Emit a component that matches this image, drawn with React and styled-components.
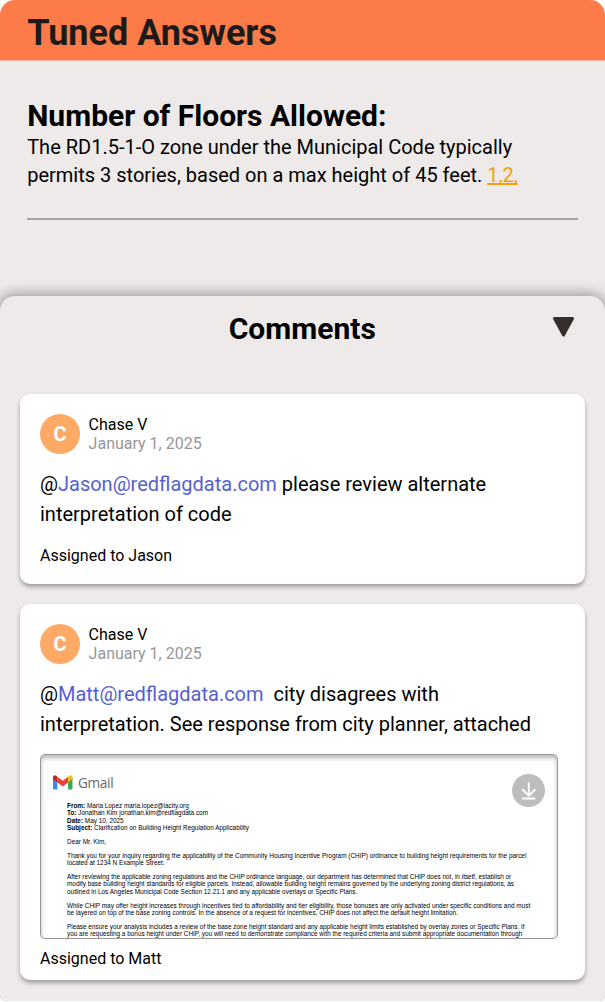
import React from "react";
import styled, { createGlobalStyle } from "styled-components";

const GlobalStyle = createGlobalStyle`
  * { box-sizing: border-box; }
  body {
    margin: 0;
    background: #fff;
    font-family: Roboto, "Liberation Sans", sans-serif;
    color: #000;
  }
  h1, h2, p { margin: 0; }
`;

const Page = styled.main`
  width: 605px;
  height: 1001px;
  overflow: hidden;
  display: flex;
  flex-direction: column;
  background: #eeeae9;
  border-radius: 15px 15px 5px 5px;
`;

const TitleBar = styled.header`
  flex: none;
  height: 61px;
  padding: 12px 27.2px 0;
  background: #fd7b48;
  border-bottom: 1px solid #f6b299;
`;

const Title = styled.h1`
  font-size: 36px;
  line-height: 42px;
  font-weight: 700;
  color: #1c1b1a;
`;

const Answer = styled.section`
  flex: none;
  height: 235px;
  padding: 37px 27.2px 0;
`;

const Heading = styled.h2`
  font-size: 30px;
  line-height: 35px;
  font-weight: 700;
`;

const AnswerText = styled.p`
  font-size: 20px;
  line-height: 28px;
  white-space: nowrap;
`;

const Source = styled.a`
  color: #f59e0b;
  text-decoration: underline;
  text-decoration-skip-ink: none;
`;

const Divider = styled.hr`
  margin: 29px 0 0;
  height: 1.5px;
  border: 0;
  background: #a5a2a2;
`;

const CommentsPanel = styled.section`
  flex: 1;
  padding: 0 20px;
  background: #eeeae9;
  border-radius: 15px 15px 5px 5px;
  box-shadow: 0 0 14px 2px rgba(0, 0, 0, 0.37);
`;

const PanelHeader = styled.div`
  height: 98px;
  padding: 15px 10px 0 9.6px;
  display: grid;
  grid-template-columns: 22px 1fr 22px;
  align-items: start;
  text-align: center;
`;

const Toggle = styled.svg`
  grid-column: 3;
  margin-top: 6px;
  width: 22px;
  height: 20px;
  display: block;
  overflow: visible;
`;

const PanelTitle = styled(Heading)`
  grid-column: 2;
`;

const CommentList = styled.div`
  display: flex;
  flex-direction: column;
  gap: 20px;
`;

const Card = styled.article`
  height: ${(p) => p.$height}px;
  padding: 20px 20px 0;
  background: #fff;
  border-radius: 10px;
  box-shadow: 0 3px 4px rgba(0, 0, 0, 0.32);
`;

const Author = styled.div`
  display: flex;
  gap: 8.6px;
  height: 40px;
`;

const Avatar = styled.div`
  width: 40px;
  height: 40px;
  border-radius: 50%;
  display: flex;
  align-items: center;
  justify-content: center;
  background: #fea964;
  color: #fff;
  font-size: 20px;
  font-weight: 700;
`;

const AuthorInfo = styled.div`
  padding-top: 1px;
  font-size: 16px;
  line-height: 19px;
`;

const PostedOn = styled.div`
  color: #979797;
`;

const Message = styled.p`
  margin-top: 15px;
  font-size: 20px;
  line-height: 30px;
  white-space: pre;
`;

const Mention = styled.span`
  color: #5661d0;
`;

const Assignee = styled.p`
  margin-top: ${(p) => p.$gap}px;
  font-size: 16px;
  line-height: 19px;
`;

const Attachment = styled.div`
  position: relative;
  width: 518px;
  height: 185px;
  margin-top: 15px;
  padding: 20px 0 0 12px;
  overflow: hidden;
  border: 1px solid #9b9694;
  border-radius: 5px;
  box-shadow: inset 0 3px 4px rgba(0, 0, 0, 0.28);
`;

const Brand = styled.div`
  display: flex;
  align-items: center;
  gap: 5.4px;
  height: 15px;
  color: #64686d;
  font-family: "Open Sans", sans-serif;
  font-size: 13.6px;
  letter-spacing: -0.3px;
  line-height: 15px;
`;

const BrandMark = styled.svg`
  width: 19.5px;
  height: 14.6px;
`;

const Letter = styled.div`
  margin: 12.2px 0 0 14px;
  display: flex;
  flex-direction: column;
  gap: 6.6px;
  font-family: "Liberation Sans", Arial, sans-serif;
  font-size: 6.41px;
  line-height: 7.3px;
  white-space: nowrap;
`;

const Download = styled.button`
  position: absolute;
  top: 19px;
  right: 12px;
  width: 33px;
  height: 33px;
  padding: 0;
  border: 0;
  border-radius: 50%;
  background: #bdbdbd;
`;

const DownloadIcon = styled.svg`
  display: block;
  width: 33px;
  height: 33px;
`;

const fields = [
  ["From:", "Maria Lopez maria.lopez@lacity.org"],
  ["To:", "Jonathan Kim jonathan.kim@redflagdata.com"],
  ["Date:", "May 10, 2025"],
  ["Subject:", "Clarification on Building Height Regulation Applicability"],
];

const paragraphs = [
  ["Dear Mr. Kim,"],
  [
    "Thank you for your inquiry regarding the applicability of the Community Housing Incentive Program (CHIP) ordinance to building height requirements for the parcel",
    "located at 1234 N Example Street.",
  ],
  [
    "After reviewing the applicable zoning regulations and the CHIP ordinance language, our department has determined that CHIP does not, in itself, establish or",
    "modify base building height standards for eligible parcels. Instead, allowable building height remains governed by the underlying zoning district regulations, as",
    "outlined in Los Angeles Municipal Code Section 12.21.1 and any applicable overlays or Specific Plans.",
  ],
  [
    "While CHIP may offer height increases through incentives tied to affordability and tier eligibility, those bonuses are only activated under specific conditions and must",
    "be layered on top of the base zoning controls. In the absence of a request for incentives, CHIP does not affect the default height limitation.",
  ],
  [
    "Please ensure your analysis includes a review of the base zone height standard and any applicable height limits established by overlay zones or Specific Plans. If",
    "you are requesting a bonus height under CHIP, you will need to demonstrate compliance with the required criteria and submit appropriate documentation through",
  ],
];

function CommentAuthor() {
  return (
    <Author>
      <Avatar>C</Avatar>
      <AuthorInfo>
        <div>Chase V</div>
        <PostedOn>January 1, 2025</PostedOn>
      </AuthorInfo>
    </Author>
  );
}

function EmailAttachment() {
  return (
    <Attachment>
      <Brand>
        <BrandMark viewBox="0 0 20 15">
          <path d="M0 2.5 4.5 5.5V15H1.4C.6 15 0 14.4 0 13.6Z" fill="#4285f4" />
          <path d="M15.5 5.5 20 2.5V13.6c0 .8-.6 1.4-1.4 1.4h-3.1Z" fill="#34a853" />
          <path d="M4.5 7.6V1.7L10 5.8l5.5-4.1v5.9L10 11.7Z" fill="#ea4335" />
          <path d="M0 4.2V2.3C0 .4 2-.5 3.4.8l1.1.9v5.9Z" fill="#c5221f" />
          <path d="M15.5 7.6V1.7l1.1-.9C18-.5 20 .4 20 2.3v1.9Z" fill="#fbbc04" />
        </BrandMark>
        <span>Gmail</span>
      </Brand>
      <Letter>
        <div>
          {fields.map(([label, value]) => (
            <div key={label}>
              <b>{label}</b> {value}
            </div>
          ))}
        </div>
        {paragraphs.map((lines) => (
          <div key={lines[0]}>
            {lines.map((line) => (
              <div key={line}>{line}</div>
            ))}
          </div>
        ))}
      </Letter>
      <Download aria-label="Download">
        <DownloadIcon viewBox="0 0 33 33" fill="none" stroke="#fff" strokeWidth="1.9">
          <path d="M16.8 8.5v13M10.2 15.2l6.6 6.5 6.6-6.5M10 24.5h13.2" />
        </DownloadIcon>
      </Download>
    </Attachment>
  );
}

export default function App() {
  return (
    <>
      <GlobalStyle />
      <Page>
        <TitleBar>
          <Title>Tuned Answers</Title>
        </TitleBar>
        <Answer>
          <Heading>Number of Floors Allowed:</Heading>
          <AnswerText>
            The RD1.5-1-O zone under the Municipal Code typically
            <br />
            permits 3 stories, based on a max height of 45 feet. <Source>1,2,</Source>
          </AnswerText>
          <Divider />
        </Answer>
        <CommentsPanel>
          <PanelHeader>
            <PanelTitle>Comments</PanelTitle>
            <Toggle viewBox="0 0 22 20">
              <path
                d="M1.5 1.5h18L10.5 18Z"
                fill="#372d2c"
                stroke="#372d2c"
                strokeWidth="3"
                strokeLinejoin="round"
              />
            </Toggle>
          </PanelHeader>
          <CommentList>
            <Card $height={190}>
              <CommentAuthor />
              <Message>
                @<Mention>Jason@redflagdata.com</Mention>
                {" please review alternate\ninterpretation of code"}
              </Message>
              <Assignee $gap={17}>Assigned to Jason</Assignee>
            </Card>
            <Card $height={376}>
              <CommentAuthor />
              <Message>
                @<Mention>Matt@redflagdata.com</Mention>
                {"  city disagrees with\ninterpretation. See response from city planner, attached"}
              </Message>
              <EmailAttachment />
              <Assignee $gap={10}>Assigned to Matt</Assignee>
            </Card>
          </CommentList>
        </CommentsPanel>
      </Page>
    </>
  );
}
